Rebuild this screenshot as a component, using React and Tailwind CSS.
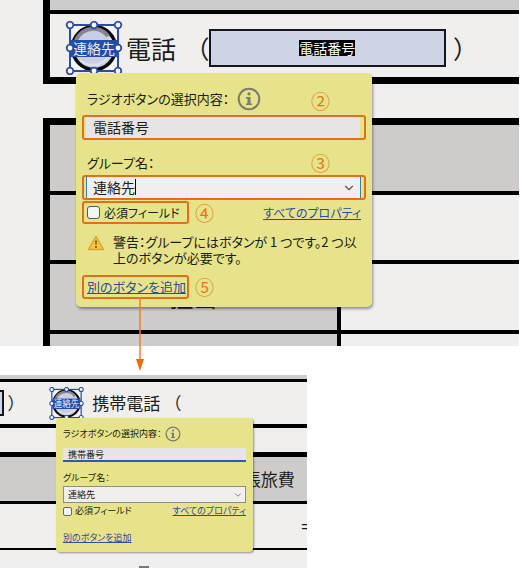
import { ChevronDown } from "lucide-react";

const HANDLES = [
  [4, 4],
  [28, 4],
  [52, 4],
  [4, 27],
  [52, 27],
  [4, 50],
  [28, 50],
  [52, 50],
];

// selected radio button with its eight drag handles
function SelectedRadio({ className }) {
  return (
    <svg viewBox="0 0 56 54" className={className} role="img">
      <rect x="4" y="4" width="48" height="46" fill="#f5f5f6" />
      <circle cx="28" cy="27" r="21.500" fill="#c9cee2" stroke="#080808" strokeWidth="3.500" />
      <path d="M11 35a18.500 18.500 0 0 1 31-20" fill="none" stroke="#85868c" strokeWidth="4" />
      <path d="M44 17a19 19 0 0 1-30 22" fill="none" stroke="#e1e3ed" strokeWidth="2" />
      <rect x="5" y="19" width="46" height="17" fill="#1f4fa8" />
      <text x="28" y="33" textAnchor="middle" fontSize="14" fill="#e8edfb">
        連絡先
      </text>
      <rect x="4" y="4" width="48" height="46" fill="none" stroke="#2c4ca6" strokeWidth="2" />
      {HANDLES.map(([x, y]) => (
        <circle key={`${x}-${y}`} cx={x} cy={y} r="3.300" fill="#fff" stroke="#2c4ca6" strokeWidth="1.800" />
      ))}
    </svg>
  );
}

function InfoIcon({ className }) {
  return (
    <svg viewBox="0 0 24 24" className={className}>
      <circle cx="12" cy="12" r="10.300" fill="none" stroke="#7d7b70" strokeWidth="2" />
      <circle cx="12" cy="6.800" r="1.600" fill="#7d7b70" />
      <path d="M9 10h4.500v6.500H15V18H9v-1.500h1.500v-5H9z" fill="#7d7b70" />
    </svg>
  );
}

function WarningIcon() {
  return (
    <svg viewBox="0 0 18 16" className="mt-px h-4 w-[18px] shrink-0">
      <path d="M9 1.500 16.500 14.500h-15z" fill="#f8c83e" stroke="#dca23a" strokeWidth="1.500" strokeLinejoin="round" />
      <path d="M8.200 5.500h1.600l-.3 4.500h-1z" fill="#5d4a1c" />
      <circle cx="9" cy="12" r="1" fill="#5d4a1c" />
    </svg>
  );
}

function Marker({ children, className = "" }) {
  return <span className={`text-[19px] leading-5 text-[#e2781c] ${className}`}>{children}</span>;
}

function RadioDialog() {
  return (
    <section className="absolute left-[76px] top-[73px] z-10 w-[296px] whitespace-nowrap rounded-[5px] bg-[#e6e38a] px-1.5 pb-2 text-[13px] text-[#1c1c12] shadow-[1px_2px_3px_rgba(0,0,0,0.4)]">
      <div className="flex h-[42px] items-center pl-[5px] pt-2.5">
        <label htmlFor="choice">ラジオボタンの選択内容：</label>
        <InfoIcon className="ml-2 size-6" />
        <Marker className="ml-auto mr-9 mt-1">②</Marker>
      </div>
      <div className="flex h-[25px] rounded-[3px] border-2 border-[#e0701c] pl-0.5 pr-1">
        <input
          id="choice"
          type="text"
          defaultValue="電話番号"
          className="w-full bg-[#e6e4e5] pl-[7px] text-[14px] outline-none"
        />
      </div>
      <div className="flex h-[35px] items-center pl-[5px] pt-2.5">
        <label htmlFor="group">グループ名：</label>
        <Marker className="ml-auto mr-9">③</Marker>
      </div>
      <div className="h-[25px] rounded-[3px] border-2 border-[#e0701c] pl-0.5 pr-[3px]">
        <div className="relative h-full border-x border-[#3f7fae] bg-[#f1efee]">
          <select id="group" className="block h-full w-full appearance-none pl-1.5 text-[14px] outline-none">
            <option>連絡先</option>
          </select>
          <span className="absolute left-12 top-0.5 h-4 w-px bg-black" />
          <ChevronDown className="pointer-events-none absolute right-1 top-1 size-3.5 text-[#555]" strokeWidth={2} />
        </div>
      </div>
      <div className="mt-px flex items-center text-[12px]">
        <label className="flex h-[23px] w-[107px] items-center gap-1 rounded-[3px] border-2 border-[#e0701c] pl-[3px]">
          <input
            type="checkbox"
            className="size-[13px] appearance-none rounded-[3px] border border-[#55555c] bg-[#f4f3f5]"
          />
          必須フィールド
        </label>
        <Marker className="ml-1.5">④</Marker>
        <a href="#" className="ml-auto mr-[5px] text-[#2f4a9e] underline">
          すべてのプロパティ
        </a>
      </div>
      <div className="mt-2.5 flex gap-2 pl-[5px] leading-4">
        <WarningIcon />
        <p>
          警告：グループにはボタンが 1 つです。2 つ以
          <br />
          上のボタンが必要です。
        </p>
      </div>
      <div className="mt-[9px] flex items-center">
        <div className="relative flex h-6 w-[107px] items-center rounded-[3px] border-2 border-[#e0701c] pl-[3px]">
          <a href="#" className="text-[#2f4a9e] underline">
            別のボタンを追加
          </a>
          <svg viewBox="0 0 10 74" className="absolute left-[51px] top-full h-[74px] w-2.5">
            <path d="M5 0v64" stroke="#ef7d2b" strokeWidth="1.500" />
            <path d="M1 62h8l-4 12z" fill="#f06a0a" />
          </svg>
        </div>
        <Marker className="ml-1.5">⑤</Marker>
      </div>
    </section>
  );
}

function CompactDialog() {
  return (
    <section className="absolute left-14 top-[43px] z-10 w-[197px] whitespace-nowrap rounded-[4px] bg-[#e6e38a] px-[7px] pb-[5px] text-[9px] text-[#1c1c12] shadow-[1px_1px_2px_rgba(0,0,0,0.4)]">
      <div className="flex h-[30px] items-center pt-0.5">
        <label htmlFor="choice2">ラジオボタンの選択内容：</label>
        <InfoIcon className="ml-1 size-4" />
      </div>
      <input
        id="choice2"
        type="text"
        defaultValue="携帯番号"
        className="block h-[14px] w-full border-b-2 border-[#2f5ba6] bg-[#e6e4e5] pl-[5px] text-[9px] outline-none"
      />
      <div className="flex h-6 items-center pt-2">
        <label htmlFor="group2">グループ名：</label>
      </div>
      <div className="relative h-[17px] border border-[#8d8d86] bg-[#f1efee]">
        <select id="group2" className="block h-full w-full appearance-none pl-1 text-[9px] outline-none">
          <option>連絡先</option>
        </select>
        <ChevronDown className="pointer-events-none absolute right-0.5 top-[3px] size-2.5 text-[#666]" strokeWidth={2} />
      </div>
      <div className="flex h-4 items-center justify-between">
        <label className="flex items-center gap-[3px]">
          <input
            type="checkbox"
            className="size-[9px] appearance-none rounded-[2px] border border-[#66666c] bg-[#f4f3f5]"
          />
          必須フィールド
        </label>
        <a href="#" className="text-[#2f4a9e] underline">
          すべてのプロパティ
        </a>
      </div>
      <div className="mt-2.5 flex h-[18px] items-center">
        <a href="#" className="text-[#2f4a9e] underline">
          別のボタンを追加
        </a>
      </div>
    </section>
  );
}

export default function App() {
  return (
    <main className="min-h-screen overflow-hidden bg-white font-['Noto_Sans_CJK_JP','Noto_Sans',sans-serif] text-[#1c1c1c] [font-feature-settings:'palt']">
      <section className="relative z-10 mr-px bg-[#f1efee] pl-[43px]">
        <div className="border-b-[7px] border-l-[7px] border-black">
          <div className="h-2.5 bg-[#cdcccb]" />
          <div className="flex h-[67px] items-center border-t-4 border-black pl-[15px] pt-1">
            <SelectedRadio className="h-[54px] w-[58px] shrink-0" />
            <span className="ml-[3px] shrink-0 text-[25px] leading-8">電話</span>
            <span className="ml-5 text-[25px] leading-8">（</span>
            <button className="flex h-[38px] flex-1 items-center justify-center border-2 border-[#15151a] bg-[#ced3e5]">
              <span className="bg-black text-[14px] leading-4 text-white">電話番号</span>
            </button>
            <span className="ml-2 w-[65px] shrink-0 text-[25px] leading-8">）</span>
          </div>
        </div>
        <div className="mt-[34px] border-l-[7px] border-t-[7px] border-black">
          <div className="h-[66px] bg-[#cdcccb]" />
          <div className="grid grid-cols-[287px_1fr]">
            <div className="h-[69px] border-t-4 border-black bg-[#cdcccb]" />
            <div className="border-l-4 border-t-4 border-black" />
            <div className="flex h-[70px] items-center justify-center border-t-4 border-black bg-[#cdcccb] text-[24px] leading-8">
              担当
            </div>
            <div className="border-l-4 border-t-4 border-black" />
            <div className="h-4 border-t-4 border-black bg-[#cdcccb]" />
            <div className="border-l-4 border-t-4 border-black" />
          </div>
        </div>
        <RadioDialog />
      </section>

      <section className="relative mt-[29px] w-[59%] overflow-hidden bg-[#f1efee]">
        <div className="h-1 bg-[#cdcccb]" />
        <div className="flex h-[45px] items-center border-t-[3px] border-black">
          <span className="h-[26px] w-1 border-y-2 border-r-2 border-[#15151a] bg-[#ced3e5]" />
          <span className="ml-1 text-[17px] leading-6">）</span>
          <SelectedRadio className="ml-auto h-[33px] w-[35px]" />
          <span className="ml-2 text-[17px] leading-6">携帯電話</span>
          <span className="ml-3 mr-[126px] text-[17px] leading-6">（</span>
        </div>
        <div className="h-7 border-t-4 border-black" />
        <div className="flex h-[49px] items-center justify-end border-t-[5px] border-black bg-[#cdcccb] pr-3 text-[17px] leading-6">
          出張旅費
        </div>
        <div className="-mr-1 flex h-[47px] items-center justify-end border-t-[3px] border-black text-[17px] leading-6">
          =
        </div>
        <div className="flex h-5 items-end border-t-2 border-black pl-[139px]">
          <span className="h-0.5 w-2.5 bg-[#77777a]" />
        </div>
        <CompactDialog />
      </section>
    </main>
  );
}
